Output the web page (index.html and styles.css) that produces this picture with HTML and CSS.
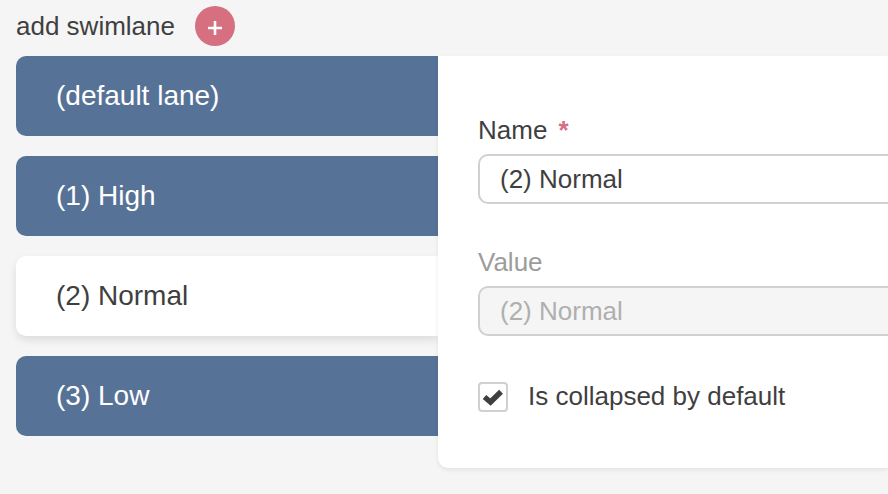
FILE: index.html
```html
<!DOCTYPE html>
<html lang="en">
<head>
<meta charset="utf-8">
<meta name="viewport" content="width=device-width, initial-scale=1">
<title>Swimlanes</title>
<link rel="stylesheet" href="styles.css">
</head>
<body>
<main class="page">
  <header class="toolbar">
    <label for="add">add swimlane</label>
    <button class="add" id="add" type="button">
      <svg viewBox="0 0 14 14" width="14" height="14" aria-hidden="true"><path d="M7 0V14M0 7H14"/></svg>
    </button>
  </header>
  <div class="editor">
    <nav class="lanes">
      <button class="lane" type="button">(default lane)</button>
      <button class="lane" type="button">(1) High</button>
      <button class="lane lane-active" type="button">(2) Normal</button>
      <button class="lane" type="button">(3) Low</button>
    </nav>
    <form class="panel">
      <div class="field">
        <label for="name">Name <span class="required">*</span></label>
        <input class="text" id="name" type="text" value="(2) Normal">
      </div>
      <div class="field field-disabled">
        <label for="value">Value</label>
        <input class="text" id="value" type="text" value="(2) Normal" disabled>
      </div>
      <div class="check">
        <span class="box">
          <input id="collapsed" type="checkbox" checked>
          <svg class="tick" viewBox="0 0 30 30" aria-hidden="true"><path d="M6.5 15L12.5 20L23 9.7"/></svg>
        </span>
        <label for="collapsed">Is collapsed by default</label>
      </div>
    </form>
  </div>
</main>
</body>
</html>
```
FILE: styles.css
```css
* {
  box-sizing: border-box;
}

body {
  margin: 0;
  background: #f5f5f5;
  color: #3f3f3f;
  font: 26px/32px "Liberation Sans", Arial, sans-serif;
}

button,
input {
  margin: 0;
  font: inherit;
  color: inherit;
}

.page {
  padding: 6px 0 26px 16px;
  overflow: hidden;
}

.toolbar {
  display: flex;
  align-items: center;
  gap: 20px;
  margin-bottom: 10px;
}

.add {
  display: flex;
  align-items: center;
  justify-content: center;
  width: 40px;
  height: 40px;
  padding: 4px 0 0;
  border: 0;
  border-radius: 50%;
  background: #d66f7f;
}

.add path {
  fill: none;
  stroke: #fff;
  stroke-width: 2.6;
}

.editor {
  display: flex;
  align-items: flex-start;
}

.lanes {
  display: flex;
  flex: 0 0 422px;
  flex-direction: column;
  gap: 20px;
}

.lane {
  height: 80px;
  padding: 0 40px;
  border: 0;
  border-radius: 10px 0 0 10px;
  background: #577297;
  color: #fff;
  font-size: 28px;
  text-align: left;
}

.lane-active {
  background: #fff;
  color: #3f3f3f;
  box-shadow: 0 4px 8px rgba(0, 0, 0, 0.1);
}

.panel {
  position: relative;
  flex: 1;
  min-width: 0;
  padding: 58px 0 56px 40px;
  border-radius: 0 0 0 10px;
  background: #fff;
  box-shadow: 0 2px 4px rgba(0, 0, 0, 0.08);
}

.field {
  display: flex;
  flex-direction: column;
  gap: 8px;
  margin-bottom: 42px;
}

.required {
  margin-left: 4px;
  color: #d66f7f;
  font-weight: bold;
  line-height: 1;
}

.text {
  width: 100%;
  height: 50px;
  padding: 0 20px;
  border: 2px solid #d0d0d0;
  border-right: 0;
  border-radius: 10px 0 0 10px;
  background: #fff;
}

.field-disabled {
  color: #9c9c9c;
}

.text:disabled {
  background: #f5f5f5;
  color: #afafaf;
}

.check {
  display: flex;
  align-items: flex-end;
  gap: 20px;
  padding-top: 2px;
}

.box {
  display: grid;
  width: 30px;
  height: 30px;
}

.box > * {
  grid-area: 1 / 1;
}

.box input {
  width: 30px;
  height: 30px;
  appearance: none;
  border: 2px solid #d0d0d0;
  border-radius: 4px;
  background: #fff;
}

.tick {
  width: 30px;
  height: 30px;
  pointer-events: none;
}

.tick path {
  fill: none;
  stroke: #3f3f3f;
  stroke-width: 5.4;
}

.box input:not(:checked) + .tick {
  visibility: hidden;
}
```
